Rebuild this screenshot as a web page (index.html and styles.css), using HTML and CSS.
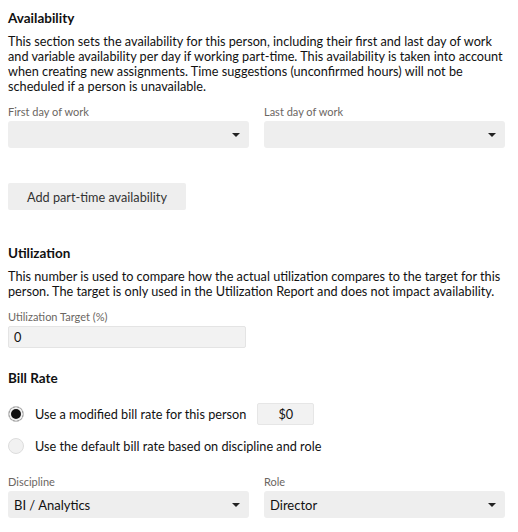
FILE: index.html
```html
<!DOCTYPE html>
<html lang="en">
<head>
  <meta charset="UTF-8">
  <title>Person settings</title>
  <link rel="stylesheet" href="styles.css">
</head>
<body>
  <div class="form">
    <section class="section section-availability">
      <h3 class="heading">Availability</h3>
      <p class="desc">This section sets the availability for this person, including their first and last day of work and variable availability per day if working part-time. This availability is taken into account when creating new assignments. Time suggestions (unconfirmed hours) will not be scheduled if a person is unavailable.</p>
      <div class="row">
        <div class="field">
          <label class="label">First day of work</label>
          <div class="select"><span></span><span class="caret"></span></div>
        </div>
        <div class="field">
          <label class="label">Last day of work</label>
          <div class="select"><span></span><span class="caret"></span></div>
        </div>
      </div>
      <button class="btn">Add part-time availability</button>
    </section>

    <section class="section section-utilization">
      <h3 class="heading">Utilization</h3>
      <p class="desc">This number is used to compare how the actual utilization compares to the target for this person. The target is only used in the Utilization Report and does not impact availability.</p>
      <label class="label">Utilization Target (%)</label>
      <div class="input">0</div>
    </section>

    <section class="section">
      <h3 class="heading">Bill Rate</h3>
      <div class="radios">
        <div class="radio-row">
          <span class="radio checked"></span>
          <span>Use a modified bill rate for this person</span>
          <span class="rate">$0</span>
        </div>
        <div class="radio-row">
          <span class="radio"></span>
          <span>Use the default bill rate based on discipline and role</span>
        </div>
      </div>
      <div class="row row-bottom">
        <div class="field">
          <label class="label">Discipline</label>
          <div class="select"><span>BI / Analytics</span><span class="caret"></span></div>
        </div>
        <div class="field">
          <label class="label">Role</label>
          <div class="select"><span>Director</span><span class="caret"></span></div>
        </div>
      </div>
    </section>
  </div>
</body>
</html>
```
FILE: styles.css
```css
body {
  margin: 0;
  font-family: Lato, "Open Sans", sans-serif;
  font-size: 12.7px;
  color: #111;
  background: #fff;
}

.form {
  padding: 10px 8px 0 8px;
}

.section-availability {
  margin-bottom: 35px;
}

.section-utilization {
  margin-bottom: 22px;
}

.heading {
  margin: 0 0 8px;
  font-size: 13.5px;
  font-weight: 700;
  line-height: 16px;
}

.desc {
  margin: 0 0 11px;
  line-height: 15px;
}

.row {
  display: flex;
  gap: 15px;
  margin-right: 5px;
}

.field {
  flex: 1;
}

.label {
  display: block;
  font-size: 11px;
  color: #6b6662;
  line-height: 14px;
  margin-bottom: 2px;
}

.select {
  height: 27px;
  background: #eeeeee;
  border-radius: 3px;
  display: flex;
  align-items: center;
  justify-content: space-between;
  padding: 0 9px 0 6px;
  font-size: 13px;
  color: #111;
}

.caret {
  width: 0;
  height: 0;
  border-left: 4px solid transparent;
  border-right: 4px solid transparent;
  border-top: 4px solid #222;
}

.btn {
  display: block;
  margin-top: 35px;
  height: 27px;
  width: 178px;
  border: none;
  border-radius: 2px;
  background: #eeeeee;
  font-family: inherit;
  font-size: 12.7px;
  color: #333;
  cursor: pointer;
}

.input {
  width: 231px;
  height: 20px;
  line-height: 20px;
  background: #f2f2f2;
  border: 1px solid #e4e4e4;
  border-radius: 2px;
  padding-left: 5px;
}

.radios {
  margin-top: 17px;
}

.radio-row {
  display: flex;
  align-items: center;
  gap: 11px;
  height: 22px;
  margin-bottom: 10px;
}

.radio {
  width: 14px;
  height: 14px;
  border-radius: 50%;
  border: 1px solid #ddd;
  background: #f1f1f1;
}

.radio.checked {
  background: #111;
  box-shadow: inset 0 0 0 2px #f1f1f1;
  border-color: #ccc;
}

.rate {
  width: 55px;
  height: 20px;
  line-height: 20px;
  text-align: center;
  background: #f2f2f2;
  border: 1px solid #e6e6e6;
  border-radius: 2px;
}

.row-bottom {
  margin-top: 18px;
}
```
